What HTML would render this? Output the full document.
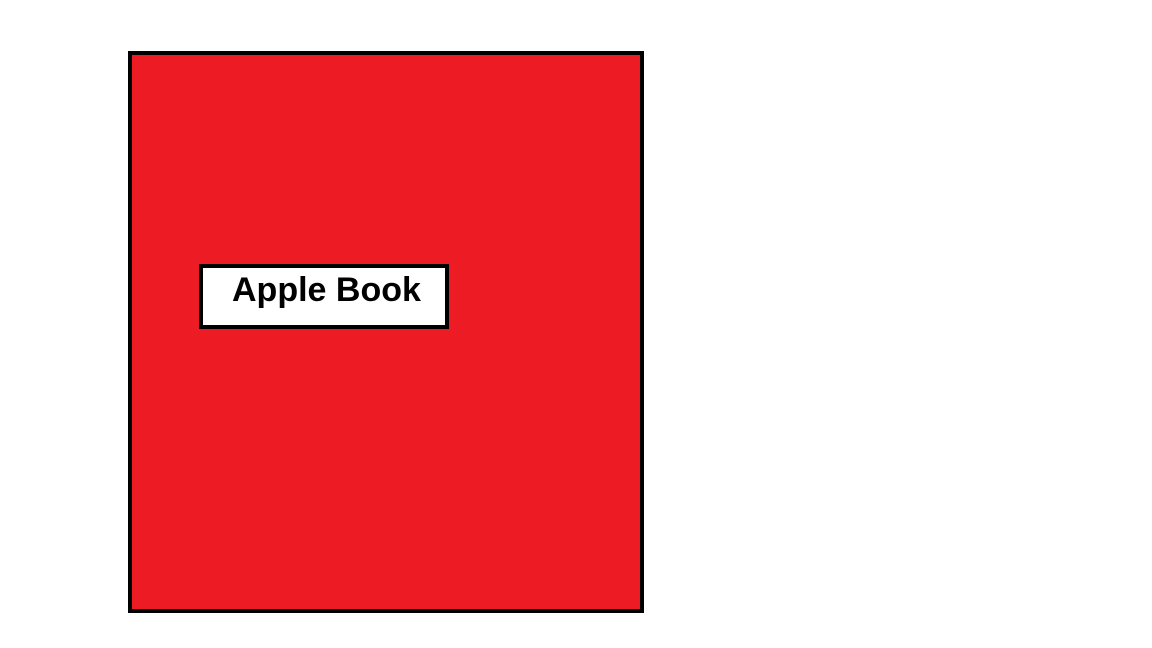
<!DOCTYPE html>
<html><head><style>
html,body{margin:0;padding:0;width:1152px;height:648px;background:#fff;overflow:hidden}
.outer{position:absolute;left:128px;top:51px;width:508px;height:554px;background:#ed1c24;border:4.5px solid #000}
.inner{position:absolute;left:199px;top:264px;width:242px;height:57px;background:#fff;border:4px solid #000}
.t{position:absolute;left:232px;top:270px;font:bold 34px "Liberation Sans",sans-serif;color:#000;white-space:nowrap;line-height:40px}
</style></head><body>
<div class="outer"></div>
<div class="inner"></div>
<div class="t">Apple Book</div>
</body></html>
